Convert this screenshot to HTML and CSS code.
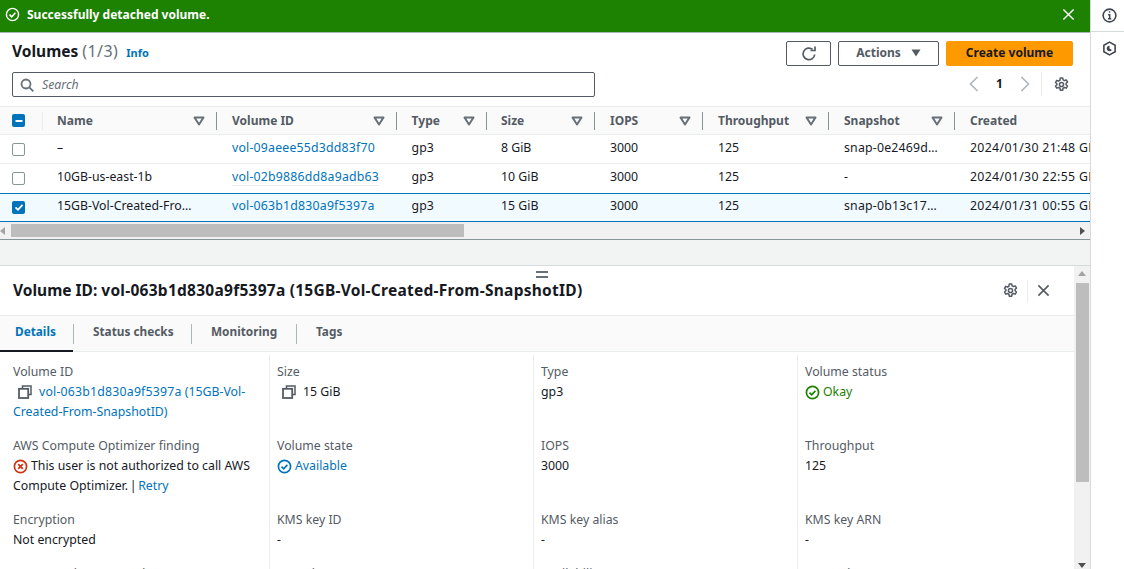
FILE: index.html
```html
<!DOCTYPE html>
<html lang="en">
<head>
<meta charset="utf-8">
<title>Volumes</title>
<link rel="stylesheet" href="styles.css">
</head>
<body>
<svg class="defs" width="0" height="0" aria-hidden="true">
  <symbol id="caret" viewBox="0 0 12 10"><path d="M1.5 1.5h9L6 8.5z" fill="none" stroke="#687078" stroke-width="2" stroke-linejoin="round"/></symbol>
  <symbol id="copy" viewBox="0 0 14 14"><path d="M4.5 3.5V1h8.5v8.500H10.500" fill="none" stroke="#545b64" stroke-width="1.500"/><rect x="1" y="3.800" width="9.200" height="9.200" fill="none" stroke="#545b64" stroke-width="1.800"/></symbol>
  <symbol id="gear" viewBox="0 0 16 16"><path d="M6.700 1h2.600l.4 2 1.500.8 1.900-.7 1.300 2.300-1.500 1.300v1.600l1.500 1.300-1.300 2.300-1.900-.7-1.500.8-.4 2H6.700l-.4-2-1.500-.8-1.900.7-1.300-2.300 1.500-1.300V7.200L1.600 5.900l1.300-2.300 1.900.7 1.500-.8z" fill="none" stroke="#545b64" stroke-width="1.600" stroke-linejoin="round"/><circle cx="8" cy="8" r="2.200" fill="none" stroke="#545b64" stroke-width="1.600"/></symbol>
</svg>
<div class="app">
  <main class="main">
    <div class="flash">
      <svg class="flash-icon" viewBox="0 0 16 16"><circle cx="8" cy="8" r="6.500" fill="none" stroke="#fff" stroke-width="1.500"/><path d="M4.800 8.200l2.300 2.300 4-4.300" fill="none" stroke="#fff" stroke-width="1.700"/></svg>
      <span class="flash-text">Successfully detached volume.</span>
      <svg class="flash-close" viewBox="0 0 14 14"><path d="M1.500 1.500l11 11M12.500 1.500l-11 11" stroke="#fff" stroke-width="1.500" fill="none"/></svg>
    </div>
    <section class="panel">
      <div class="head-row">
        <h1 class="title">Volumes <span class="count">(1/3)</span> <a class="info">Info</a></h1>
        <div class="actions">
          <button class="btn btn-icon"><svg viewBox="0 0 16 16" width="16" height="16"><path d="M13.700 8.500A5.800 5.800 0 1 1 11.600 3.400" fill="none" stroke="#545b64" stroke-width="1.700"/><path d="M9.500 4.500h4.500V0.500" fill="none" stroke="#545b64" stroke-width="1.700"/></svg></button>
          <button class="btn btn-actions">Actions <svg viewBox="0 0 10 8" width="10" height="8"><path d="M0.500 0.500h9L5 7.500z" fill="#545b64"/></svg></button>
          <button class="btn btn-primary">Create volume</button>
        </div>
      </div>
      <div class="filter-row">
        <div class="search">
          <svg viewBox="0 0 14 14" width="14" height="14"><circle cx="6" cy="6" r="4.500" fill="none" stroke="#687078" stroke-width="1.800"/><path d="M9.300 9.300l4 4" stroke="#687078" stroke-width="1.800"/></svg>
          <span>Search</span>
        </div>
        <div class="pager">
          <svg class="chev" viewBox="0 0 10 16"><path d="M8.500 1L1.500 8l7 7" fill="none" stroke="#aab7b8" stroke-width="1.600"/></svg>
          <span class="page">1</span>
          <svg class="chev" viewBox="0 0 10 16"><path d="M1.500 1l7 7-7 7" fill="none" stroke="#aab7b8" stroke-width="1.600"/></svg>
          <span class="pager-sep"><svg class="gear" viewBox="0 0 16 16"><use href="#gear"/></svg></span>
        </div>
      </div>
      <div class="table">
        <div class="row row-head">
          <div class="cell cell-check"><span class="cb cb-on"><svg viewBox="0 0 12 12" width="12" height="12"><path d="M2.500 6h7" stroke="#fff" stroke-width="2"/></svg></span></div>
          <div class="cell hcell">Name<svg class="caret"><use href="#caret"/></svg></div>
          <div class="cell hcell">Volume ID<svg class="caret"><use href="#caret"/></svg></div>
          <div class="cell hcell">Type<svg class="caret"><use href="#caret"/></svg></div>
          <div class="cell hcell">Size<svg class="caret"><use href="#caret"/></svg></div>
          <div class="cell hcell">IOPS<svg class="caret"><use href="#caret"/></svg></div>
          <div class="cell hcell">Throughput<svg class="caret"><use href="#caret"/></svg></div>
          <div class="cell hcell">Snapshot<svg class="caret"><use href="#caret"/></svg></div>
          <div class="cell hcell hcell-last">Created</div>
        </div>
        <div class="row">
          <div class="cell cell-check"><span class="cb"></span></div>
          <div class="cell">–</div>
          <div class="cell"><a class="link num">vol-09aeee55d3dd83f70</a></div>
          <div class="cell">gp3</div><div class="cell">8 GiB</div><div class="cell">3000</div><div class="cell">125</div>
          <div class="cell num">snap-0e2469d…</div>
          <div class="cell date">2024/01/30 21:48 GMT+5:30</div>
        </div>
        <div class="row">
          <div class="cell cell-check"><span class="cb"></span></div>
          <div class="cell">10GB-us-east-1b</div>
          <div class="cell"><a class="link link-under num">vol-02b9886dd8a9adb63</a></div>
          <div class="cell">gp3</div><div class="cell">10 GiB</div><div class="cell">3000</div><div class="cell">125</div>
          <div class="cell">-</div>
          <div class="cell date">2024/01/30 22:55 GMT+5:30</div>
        </div>
        <div class="row row-sel">
          <div class="cell cell-check"><span class="cb cb-on"><svg viewBox="0 0 12 12" width="12" height="12"><path d="M2.500 6.300l2.500 2.500 4.500-5" stroke="#fff" stroke-width="1.800" fill="none"/></svg></span></div>
          <div class="cell">15GB-Vol-Created-Fro…</div>
          <div class="cell"><a class="link num">vol-063b1d830a9f5397a</a></div>
          <div class="cell">gp3</div><div class="cell">15 GiB</div><div class="cell">3000</div><div class="cell">125</div>
          <div class="cell num">snap-0b13c17…</div>
          <div class="cell date">2024/01/31 00:55 GMT+5:30</div>
        </div>
      </div>
      <div class="hscroll">
        <svg class="sb-arrow" viewBox="0 0 6 8" width="6" height="8"><path d="M5 0v8L0 4z" fill="#a3a3a3"/></svg>
        <div class="hthumb"></div>
        <svg class="sb-arrow sb-arrow-end" viewBox="0 0 6 8" width="6" height="8"><path d="M1 0v8l5-4z" fill="#505050"/></svg>
      </div>
    </section>
    <div class="splitter"></div>
    <section class="details">
      <span class="grip"></span>
      <div class="details-body">
        <div class="details-head">
          <h2 class="details-title">Volume ID: <span class="title-id">vol-063b1d830a9f5397a (15GB-Vol-Created-From-SnapshotID)</span></h2>
          <svg class="gear gear-details" viewBox="0 0 16 16"><use href="#gear"/></svg>
          <span class="head-sep"></span>
          <svg class="close" viewBox="0 0 14 14"><path d="M1.500 1.500l11 11M12.500 1.500l-11 11" stroke="#545b64" stroke-width="1.700" fill="none"/></svg>
        </div>
        <nav class="tabs">
          <a class="tab tab-active"><span>Details</span></a>
          <a class="tab tab-status"><span>Status checks</span></a>
          <a class="tab tab-mon"><span>Monitoring</span></a>
          <a class="tab tab-tags"><span>Tags</span></a>
        </nav>
        <div class="grid">
          <div class="item"><div class="label">Volume ID</div><div class="value"><svg class="copy"><use href="#copy"/></svg><a class="link"><span class="num">vol-063b1d830a9f5397a</span> (15GB-Vol-Created-From-SnapshotID)</a></div></div>
          <div class="item"><div class="label">Size</div><div class="value"><svg class="copy"><use href="#copy"/></svg>15 GiB</div></div>
          <div class="item"><div class="label">Type</div><div class="value">gp3</div></div>
          <div class="item"><div class="label">Volume status</div><div class="value status-ok"><svg class="status" viewBox="0 0 16 16"><circle cx="8" cy="8" r="6.500" fill="none" stroke="#1d8102" stroke-width="1.800"/><path d="M4.800 8.200l2.300 2.300 4-4.300" fill="none" stroke="#1d8102" stroke-width="1.800"/></svg>Okay</div></div>

          <div class="item"><div class="label">AWS Compute Optimizer finding</div><div class="value"><svg class="status" viewBox="0 0 16 16"><circle cx="8" cy="8" r="6.500" fill="none" stroke="#d13212" stroke-width="1.800"/><path d="M5.500 5.500l5 5M10.500 5.500l-5 5" fill="none" stroke="#d13212" stroke-width="1.800"/></svg>This user is not authorized to call AWS Compute Optimizer. <span class="pipe">|</span> <a class="link">Retry</a></div></div>
          <div class="item"><div class="label">Volume state</div><div class="value status-info"><svg class="status" viewBox="0 0 16 16"><circle cx="8" cy="8" r="6.500" fill="none" stroke="#0073bb" stroke-width="1.800"/><path d="M4.800 8.200l2.300 2.300 4-4.300" fill="none" stroke="#0073bb" stroke-width="1.800"/></svg>Available</div></div>
          <div class="item"><div class="label">IOPS</div><div class="value">3000</div></div>
          <div class="item"><div class="label">Throughput</div><div class="value">125</div></div>

          <div class="item"><div class="label">Encryption</div><div class="value">Not encrypted</div></div>
          <div class="item"><div class="label">KMS key ID</div><div class="value">-</div></div>
          <div class="item"><div class="label">KMS key alias</div><div class="value">-</div></div>
          <div class="item"><div class="label">KMS key ARN</div><div class="value">-</div></div>

          <div class="item"><div class="label">Fast snapshot restored</div><div class="value">No</div></div>
          <div class="item"><div class="label">Snapshot</div><div class="value">-</div></div>
          <div class="item"><div class="label">Availability Zone</div><div class="value">-</div></div>
          <div class="item"><div class="label">Created</div><div class="value">-</div></div>
        </div>
      </div>
      <div class="vscroll">
        <svg class="sb-up" viewBox="0 0 8 6" width="8" height="6"><path d="M0 5h8L4 0z" fill="#a3a3a3"/></svg>
        <div class="vthumb"></div>
        <svg class="sb-down" viewBox="0 0 8 6" width="8" height="6"><path d="M0 0h8L4 5z" fill="#505050"/></svg>
      </div>
    </section>
  </main>
  <aside class="rail">
    <div class="rail-item"><svg viewBox="0 0 16 16" width="15" height="15"><circle cx="8" cy="8" r="6.800" fill="none" stroke="#414750" stroke-width="1.700"/><path d="M6.500 7.300H8.200V11.500M6.300 11.500h3.600M7.300 4.300h1.500" fill="none" stroke="#414750" stroke-width="1.600"/></svg></div>
    <div class="rail-item rail-item-2"><svg viewBox="0 0 16 16" width="15" height="15"><path d="M8 1.200l6 3.300v7L8 14.800 2 11.500v-7z" fill="none" stroke="#414750" stroke-width="1.700"/><path d="M8 5a3 3 0 1 0 2.600 4.500L8 8z" fill="#414750"/></svg></div>
  </aside>
</div>
</body>
</html>
```
FILE: styles.css
```css
* { box-sizing: border-box; }
html, body { margin: 0; height: 569px; overflow: hidden; background: #fff; }
body { font-family: "Noto Sans", "Open Sans", sans-serif; font-size: 12.300px; line-height: 20px; color: #16191f; }
.defs { position: absolute; }
svg { display: block; flex: none; }
.app { display: flex; height: 569px; }
.main { width: 1091px; border-right: 1px solid #d5dbdb; display: flex; flex-direction: column; overflow: hidden; }
.rail { flex: 1; display: flex; flex-direction: column; }
.rail-item { height: 32px; display: flex; align-items: center; justify-content: center; border-bottom: 1px solid #d5dbdb; padding-left: 3px; }
.rail-item-2 { border-bottom: 0; height: 32px; }

.flash { height: 33px; flex: none; background: #1d8102; border-bottom: 1px solid #aab7b8; display: flex; align-items: center; padding: 0 15px 3px 5px; color: #fff; }
.flash-icon { width: 15px; height: 15px; margin-right: 7px; }
.flash-text { font-size: 12px; font-weight: 700; flex: 1; }
.flash-close { width: 13px; height: 13px; }

.panel { background: #fff; flex: none; }
.head-row { display: flex; align-items: flex-start; justify-content: space-between; padding: 8px 17px 0 12px; height: 39px; }
.title { margin: -1px 0 0; font-size: 15.500px; font-weight: 700; line-height: 22px; }
.count { font-size: 16px; font-weight: 400; color: #687078; letter-spacing: .4px; }
.info { font-size: 11px; font-weight: 700; color: #0073bb; margin-left: 4px; }
.actions { display: flex; gap: 7px; }
.btn { font: 700 12px/20px "Noto Sans", sans-serif; height: 25px; border: 1px solid #545b64; border-radius: 2px; background: #fff; color: #545b64; display: flex; align-items: center; justify-content: center; padding: 0 0 2px; }
.btn-icon { width: 45px; padding: 0; }
.btn-actions { width: 101px; gap: 10px; }
.btn-primary { width: 127px; background: #ff9900; border-color: #ff9900; color: #16191f; }

.filter-row { display: flex; justify-content: space-between; align-items: flex-start; padding: 0 21px 0 12px; height: 34px; }
.search { width: 583px; height: 25px; border: 1px solid #545b64; border-radius: 2px; display: flex; align-items: center; gap: 8px; padding-left: 7px; font-style: italic; color: #687078; }
.pager { display: flex; align-items: center; height: 24px; }
.chev { width: 10px; height: 16px; }
.page { width: 41px; text-align: center; font-size: 12px; font-weight: 700; }
.pager-sep { margin-left: 11px; padding-left: 12px; border-left: 1px solid #eaeded; height: 24px; display: flex; align-items: center; }
.gear { width: 15px; height: 15px; }

.table { overflow: hidden; }
.row { display: grid; grid-template-columns: 43px 174px 180px 90px 108px 108px 126px 126px 200px; height: 29px; padding-bottom: 2px; border-bottom: 1px solid #eaeded; align-items: center; white-space: nowrap; }
.row:has(+ .row-sel) { border-bottom: 0; padding-bottom: 3px; }
.row-head { padding-bottom: 0; background: #fafafa; border-top: 1px solid #eaeded; border-bottom: 1px solid #eaeded; color: #545b64; font-size: 12px; font-weight: 700; }
.row-sel { background: #f1faff; border-top: 1px solid #0073bb; border-bottom: 1px solid #0073bb; padding-bottom: 3px; }
.cell { padding-left: 15px; min-width: 0; }
.cell:nth-child(2), .cell:nth-child(5) { padding-left: 14px; }
.cell:nth-child(4) { padding-left: 14.600px; }
.cell-check { padding-left: 12px; display: flex; }
.row-head .cell-check { border-right: 1px solid #eaeded; height: 18px; align-items: center; }
.hcell { display: flex; align-items: center; justify-content: space-between; height: 18px; padding-right: 11px; border-right: 1px solid #879596; }
.hcell-last { border-right: 0; }
.caret { width: 12px; height: 10px; }
.cb { width: 13px; height: 13px; border: 1.500px solid #879596; border-radius: 2px; background: #fff; display: block; position: relative; top: 1px; }
.row-head .cb { top: 0; }
.cb-on { background: #0073bb; border: 0; display: flex; align-items: center; justify-content: center; }
.link { color: #0073bb; }
.num { letter-spacing: .2px; }
.date { letter-spacing: .34px; }
.link-under { border-bottom: 1px solid #eaeded; }

.hscroll { height: 18px; background: #f1f1f1; border-bottom: 1px solid #879596; display: flex; align-items: flex-start; padding: 2px 5px 0 0; }
.sb-arrow { margin-top: 3px; }
.hthumb { width: 453px; height: 13px; margin-left: 5px; background: #bdbdbd; }
.sb-arrow-end { margin-left: auto; }
.splitter { height: 26px; flex: none; background: #f2f3f3; border-bottom: 1px solid #d5dbdb; }
.grip { position: absolute; left: 536px; top: 271px; width: 12px; height: 7px; border-top: 2px solid #687078; border-bottom: 2px solid #687078; }

.details { flex: 1; display: flex; min-height: 0; overflow: hidden; }
.details-body { width: 1074px; flex: none; }
.vscroll { flex: 1; background: #f1f1f1; display: flex; flex-direction: column; align-items: center; padding: 5px 0 0; }
.vthumb { width: 13px; height: 199px; background: #bdbdbd; margin-top: 6px; }
.sb-down { margin-top: auto; }

.details-head { height: 50px; display: flex; align-items: center; padding: 0 24px 0 13px; border-bottom: 1px solid #eaeded; }
.details-title { margin: 0 0 2px; flex: 1; font-size: 15.500px; line-height: 22px; font-weight: 700; }
.title-id { letter-spacing: .26px; }
.gear-details { width: 15px; height: 15px; }
.head-sep { width: 1px; height: 22px; background: #eaeded; margin: 0 9px 0 9px; }
.close { width: 13px; height: 13px; }

.tabs { height: 36px; display: flex; align-items: center; background: #fafafa; border-bottom: 1px solid #eaeded; font-size: 11.800px; font-weight: 700; color: #545b64; }
.tab { height: 20px; display: flex; align-items: flex-start; border-right: 1px solid #aab7b8; padding-left: 19px; }
.tab span { margin-top: -3px; }
.tab-active { width: 74px; padding-left: 15px; color: #0073bb; position: relative; }
.tab-active::after { content: ""; position: absolute; left: 0; right: 0; bottom: -8px; height: 2px; background: #16191f; }
.tab-status { width: 118px; }
.tab-mon { width: 105px; }
.tab-tags { border-right: 0; }

.grid { width: 1074px; display: grid; grid-template-columns: repeat(4, 264px); padding: 3px 0 0 6px; }
.item { padding: 0 8px 14px 7px; border-right: 1px solid #eaeded; }
.item:nth-child(-n+4) { padding-top: 7px; }
.item:nth-child(4n) { border-right: 0; }
.label { color: #545b64; }
.value { min-height: 20px; }
.pipe { margin: 0 -1.500px; }
.copy { width: 14px; height: 14px; display: inline-block; vertical-align: -3px; margin: 0 7px 0 5px; }
.status { width: 15px; height: 15px; display: inline-block; vertical-align: -4px; margin-right: 3px; }
.status-ok { color: #1d8102; }
.status-info { color: #0073bb; }
```
